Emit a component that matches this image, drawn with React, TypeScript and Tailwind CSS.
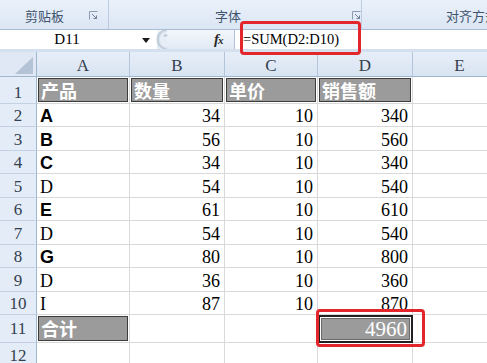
import React from "react";

const rows: [number, string, boolean, number, number, number][] = [
  [2, "A", true, 34, 10, 340],
  [3, "B", true, 56, 10, 560],
  [4, "C", true, 34, 10, 340],
  [5, "D", false, 54, 10, 540],
  [6, "E", true, 61, 10, 610],
  [7, "D", false, 54, 10, 540],
  [8, "G", true, 80, 10, 800],
  [9, "D", false, 36, 10, 360],
  [10, "I", false, 87, 10, 870],
];

function Launcher() {
  return (
    <svg width="9" height="9" viewBox="0 0 9 9" className="block">
      <path d="M0.5 8.5 V0.5 H8.5" fill="none" stroke="#8a9bb2" strokeWidth="1" />
      <path d="M3 3 L7.5 7.5 M4.5 7.5 H7.5 V4.5" fill="none" stroke="#6f8099" strokeWidth="1" />
    </svg>
  );
}

function RowHead({ n, tall }: { n: number; tall?: boolean }) {
  return (
    <div
      className={
        "flex justify-center items-end bg-[#e4ecf7] border-b border-r border-b-[#c3d1e3] border-r-[#9eb6ce] text-[17px] leading-[20px] text-[#33404f] font-['Liberation_Serif',serif] " +
        (tall ? "pb-[3px]" : "")
      }
    >
      {n}
    </div>
  );
}

function Cell({ children, right, bold }: { children?: React.ReactNode; right?: boolean; bold?: boolean }) {
  return (
    <div
      className={
        "flex items-end border-r border-b border-[#d9d9d9] text-[18px] leading-[20px] text-black " +
        (right ? "justify-end pr-[4px] " : "pl-[3px] ") +
        (bold ? "font-['Liberation_Sans',sans-serif] font-bold text-[16px]" : "font-['Liberation_Serif',serif]")
      }
    >
      {children}
    </div>
  );
}

function GrayCell({ children }: { children: React.ReactNode }) {
  return (
    <div className="border-r border-b border-[#d9d9d9] p-[1px] min-w-0">
      <div className="h-full flex items-center border border-[#3d3d3d] bg-[#9b9b9b] pl-[2px] text-white font-bold text-[18px] leading-[20px] font-['Noto_Sans_CJK_SC',sans-serif] whitespace-nowrap">
        {children}
      </div>
    </div>
  );
}

export default function App() {
  return (
    <div className="relative w-[487px] h-[363px] overflow-hidden bg-white font-['Noto_Sans_CJK_SC',sans-serif]">
      {/* Ribbon group labels */}
      <div className="h-[30px] flex border-b border-[#a9bcd4] bg-gradient-to-b from-[#eaf1fa] to-[#dbe6f4] text-[13px] text-[#40536d]">
        <div className="w-[108px] flex items-center pt-[2px] pl-[25px] shrink-0">
          <span className="w-[64px]">剪贴板</span>
          <Launcher />
        </div>
        <div className="w-px bg-[#bccce0] shrink-0" />
        <div className="w-[252px] flex items-center pt-[2px] shrink-0">
          <span className="ml-[106px] w-[137px]">字体</span>
          <Launcher />
        </div>
        <div className="w-px bg-[#bccce0] shrink-0" />
        <div className="flex-1 min-w-0 overflow-hidden flex items-center pt-[2px] pl-[84px] whitespace-nowrap">对齐方式</div>
      </div>

      {/* Formula bar */}
      <div className="h-[22px] bg-[#d5e0ee] pb-[3px]">
        <div className="h-[19px] flex">
          <div className="w-[157px] bg-white flex items-center shrink-0">
            <div className="w-[134px] flex justify-center text-[15px] leading-[19px] text-black font-['Liberation_Serif',serif]">D11</div>
            <svg width="8" height="5" viewBox="0 0 8 5" className="ml-[8px] mt-[1px]">
              <path d="M0 0 H8 L4 5 Z" fill="#1a1a1a" />
            </svg>
          </div>
          <div className="w-[78px] shrink-0 flex items-center bg-gradient-to-b from-[#f3f7fc] to-[#e2eaf5] border-r border-[#b1c1d6]">
            <svg width="22" height="19" viewBox="0 0 22 19" className="block -ml-[1px]">
              <path d="M11 0.5 C4 1.5 2 5 2 9.5 C2 14 4 17.5 11 18.5" fill="none" stroke="#c3cfdd" strokeWidth="3" />
              <path d="M11 1 C5 2 3.5 5.5 3.5 9.5 C3.5 13.5 5 17 11 18" fill="#e8eef6" stroke="#d9e1ec" strokeWidth="1" />
              <ellipse cx="9.5" cy="5.5" rx="2" ry="1.2" fill="#c2ccd8" />
            </svg>
            <span className="ml-[36px] italic font-bold text-[15px] leading-[19px] text-[#2a2a2a] font-['Liberation_Serif',serif] tracking-[-1px]">
              f<span className="text-[11px]">x</span>
            </span>
          </div>
          <div className="flex-1 bg-white flex items-center pl-[8px] text-[14.5px] leading-[19px] text-black font-['Liberation_Serif',serif] whitespace-nowrap">
            =SUM(D2:D10)
          </div>
        </div>
      </div>

      {/* Grid */}
      <div className="grid grid-cols-[37px_93px_95px_93px_95px_94px] grid-rows-[25px_27px_repeat(9,23.44px)_28px_24px]">
        {/* column headers */}
        <div className="relative bg-[#dfe8f4] border-r border-b border-[#9eb6ce]">
          <svg width="18" height="17" viewBox="0 0 18 17" className="absolute right-[3px] bottom-[2px]">
            <path d="M18 0 V17 H0 Z" fill="#b4c3d5" />
          </svg>
        </div>
        {["A", "B", "C", "D", "E"].map((c) => (
          <div
            key={c}
            className="flex justify-center items-center pt-[4px] bg-gradient-to-b from-[#e6eef8] to-[#d9e4f2] border-r border-b border-r-[#b4c5da] border-b-[#9eb6ce] text-[17px] leading-[20px] text-[#34404e] font-['Liberation_Serif',serif]"
          >
            {c}
          </div>
        ))}

        {/* row 1 */}
        <RowHead n={1} />
        <GrayCell>产品</GrayCell>
        <GrayCell>数量</GrayCell>
        <GrayCell>单价</GrayCell>
        <GrayCell>销售额</GrayCell>
        <Cell />

        {rows.map(([n, p, bold, q, u, s]) => (
          <React.Fragment key={n}>
            <RowHead n={n} />
            <Cell bold={bold}>{p}</Cell>
            <Cell right>{q}</Cell>
            <Cell right>{u}</Cell>
            <Cell right>{s}</Cell>
            <Cell />
          </React.Fragment>
        ))}

        {/* row 11 */}
        <RowHead n={11} tall />
        <GrayCell>合计</GrayCell>
        <Cell />
        <Cell />
        <div className="border-2 border-[#202020] bg-white p-[1px]">
          <div className="h-full flex items-center justify-end pr-[2px] border border-[#6a6a6a] bg-[#9b9b9b] text-white text-[21px] leading-[22px] font-['Liberation_Serif',serif]">
            4960
          </div>
        </div>
        <Cell />

        {/* row 12 */}
        <RowHead n={12} />
        <Cell />
        <Cell />
        <Cell />
        <Cell />
        <Cell />
      </div>

      {/* red highlight boxes */}
      <div className="absolute left-[240px] top-[21px] w-[121px] h-[34px] border-[3px] border-[#e3262c] rounded-[4px]" />
      <div className="absolute left-[316px] top-[309px] w-[109px] h-[38px] border-[3px] border-[#e3262c] rounded-[4px]" />
    </div>
  );
}
